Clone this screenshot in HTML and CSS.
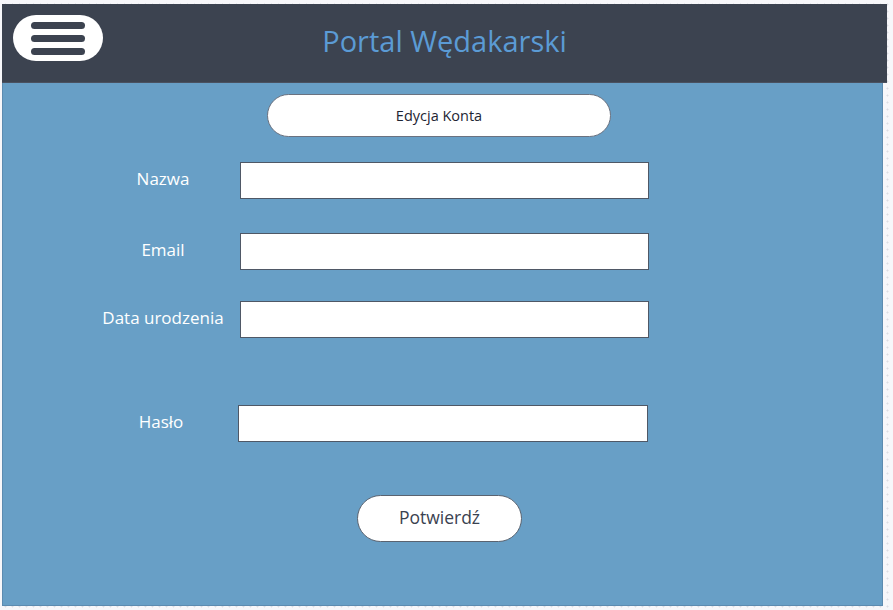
FILE: index.html
```html
<!DOCTYPE html>
<html lang="pl">
<head>
<meta charset="utf-8">
<title>Portal Wędakarski</title>
<link rel="stylesheet" href="styles.css">
</head>
<body>
<div class="frame">
  <header class="topbar">
    <button class="menu-btn" aria-label="Menu">
      <span class="bar"></span><span class="bar"></span><span class="bar"></span>
    </button>
    <h1 class="title">Portal Wędakarski</h1>
  </header>
  <main class="panel">
    <div class="section-pill">Edycja Konta</div>
    <form class="form">
      <div class="row row-name">
        <label class="label">Nazwa</label>
        <input class="field" type="text">
      </div>
      <div class="row row-email">
        <label class="label">Email</label>
        <input class="field" type="text">
      </div>
      <div class="row row-date">
        <label class="label">Data urodzenia</label>
        <input class="field" type="text">
      </div>
      <div class="row row-pass">
        <label class="label label-pass">Hasło</label>
        <input class="field field-shift" type="password">
      </div>
      <div class="actions">
        <button class="submit" type="button">Potwierdź</button>
      </div>
    </form>
  </main>
</div>
</body>
</html>
```
FILE: styles.css
```css
* { box-sizing: border-box; }
html, body { margin: 0; padding: 0; }
body {
  width: 893px;
  height: 610px;
  overflow: hidden;
  background-color: #f7f7fa;
  background-image: radial-gradient(circle, #dcdde4 0.8px, transparent 1.2px);
  background-size: 7px 7px;
  background-position: 2px 1px;
  font-family: "Open Sans", "Noto Sans", sans-serif;
  padding: 4px 6px 4px 2px;
}
.frame {
  width: 885px;
  display: flex;
  flex-direction: column;
}
.topbar {
  height: 79px;
  background: #3c4350;
  border-bottom: 1px solid #4a5160;
  display: flex;
  align-items: center;
  position: relative;
}
.menu-btn {
  margin: 0 0 0 11px;
  width: 90px;
  height: 46px;
  border-radius: 23px;
  background: #ffffff;
  border: none;
  padding: 0;
  display: flex;
  flex-direction: column;
  align-items: center;
  justify-content: center;
  gap: 6px;
  align-self: flex-start;
  margin-top: 11px;
}
.bar {
  display: block;
  width: 54px;
  height: 7px;
  border-radius: 4px;
  background: #3c4350;
}
.title {
  margin: 0;
  position: absolute;
  left: 0;
  right: 0;
  top: 18px;
  text-align: center;
  font-weight: 400;
  font-size: 29px;
  line-height: 38px;
  color: #5b9bd5;
  pointer-events: none;
}
.panel {
  width: 881px;
  height: 523px;
  background: #689fc6;
  border-right: 1px solid #5c8bb0;
  border-bottom: 1px solid #5c8bb0;
  border-left: 1px solid #5c8bb0;
  display: flex;
  flex-direction: column;
  padding-top: 11px;
}
.section-pill {
  margin-left: 264px;
  width: 344px;
  height: 43px;
  border-radius: 22px;
  background: #ffffff;
  border: 1px solid #6b7280;
  display: flex;
  align-items: center;
  justify-content: center;
  font-size: 14.5px;
  color: #1e2533;
}
.form {
  display: flex;
  flex-direction: column;
}
.row {
  display: flex;
  align-items: center;
}
.row-name { margin-top: 25px; }
.row-email { margin-top: 34px; }
.row-date { margin-top: 31px; }
.row-pass { margin-top: 67px; }
.label {
  width: 132px;
  margin-left: 95px;
  text-align: center;
  color: #ffffff;
  font-size: 17px;
  line-height: 22px;
  margin-top: -4px;
  padding-right: 2px;
}
.label-pass { padding-right: 6px; }
.field {
  margin-left: 10px;
  width: 409px;
  height: 37px;
  background: #ffffff;
  border: 1px solid #4f5866;
  border-radius: 0;
  padding: 0 8px;
  font-family: inherit;
  font-size: 14px;
}
.field-shift { margin-left: 8px; width: 410px; }
.actions {
  margin-top: 53px;
  display: flex;
}
.submit {
  margin-left: 354px;
  width: 165px;
  height: 47px;
  border-radius: 24px;
  background: #ffffff;
  border: 1px solid #5a6370;
  font-family: inherit;
  font-size: 17.5px;
  color: #3a4250;
  padding: 0 0 4px;
}
```
